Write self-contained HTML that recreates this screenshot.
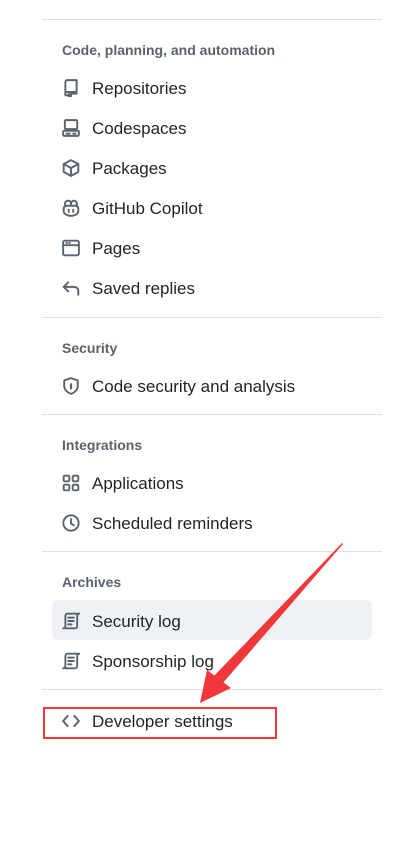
<!DOCTYPE html>
<html><head><meta charset="utf-8"><style>
*{margin:0;padding:0;box-sizing:border-box}
body{width:406px;height:852px;background:#fff;position:relative;overflow:hidden;font-family:"Liberation Sans",Arial,sans-serif;color:#1f2328}
.hr{position:absolute;left:42px;width:340px;height:1px;background:#dde1e5}
.h{position:absolute;left:62px;font-size:14px;font-weight:bold;color:#59636e;line-height:20px}
.it{position:absolute;left:92px;font-size:17px;line-height:24px}
svg.i{position:absolute;left:62px;width:18px;height:18px;fill:none;stroke:#59636e;stroke-width:1.7;stroke-linecap:round;stroke-linejoin:round}
</style></head><body>
<div class="hr" style="top:19px"></div>
<div class="h" style="top:40px">Code, planning, and automation</div>

<svg class="i" style="top:79px" viewBox="0 0 16 16"><path d="M3 14.5V2.5A1.5 1.5 0 0 1 4.5 1H13v10.5H4.5A1.5 1.5 0 0 0 3 13v1.5h2"/><path d="M6 13v2.5l1-.8 1 .8V13h5"/></svg>
<div class="it" style="top:77px">Repositories</div>
<svg class="i" style="top:119px" viewBox="0 0 16 16"><rect x="2.5" y="1" width="11" height="8" rx="1"/><rect x="1" y="10.5" width="14" height="4.5" rx="1"/><path d="M4 13h3M10 13h2"/></svg>
<div class="it" style="top:117px">Codespaces</div>
<svg class="i" style="top:159px" viewBox="0 0 16 16"><path d="M8 1l6.5 3.5v7L8 15l-6.5-3.5v-7z"/><path d="M1.5 4.5L8 8l6.5-3.5M8 8v7"/></svg>
<div class="it" style="top:157px">Packages</div>
<svg class="i" style="top:199px" viewBox="0 0 16 16"><path d="M3 6.5C2 4 3 1.5 5.5 1.5S8 3.5 8 5c0-1.5.5-3.5 2.5-3.5S14 4 13 6.5"/><path d="M1.5 8.5c0-1.5 1-2.5 2.5-2.5h8c1.5 0 2.5 1 2.5 2.5v2.5C14.5 13 11.5 15 8 15S1.5 13 1.5 11z"/><path d="M6 9.5v2M10 9.5v2"/></svg>
<div class="it" style="top:197px">GitHub Copilot</div>
<svg class="i" style="top:239px" viewBox="0 0 16 16"><rect x="1" y="1.5" width="14" height="13" rx="1.5"/><path d="M1 5.5h14M4 3.5h.5M6.5 3.5h.5"/></svg>
<div class="it" style="top:237px">Pages</div>
<svg class="i" style="top:279px" viewBox="0 0 16 16"><path d="M5.5 3L1.5 7l4 4"/><path d="M1.5 7H11a3.5 3.5 0 0 1 3.5 3.5V14"/></svg>
<div class="it" style="top:277px">Saved replies</div>

<div class="hr" style="top:317px"></div>
<div class="h" style="top:338px">Security</div>
<svg class="i" style="top:377px" viewBox="0 0 16 16"><path d="M8 1l6 2v5c0 3.5-3 6-6 7-3-1-6-3.5-6-7V3z"/><path d="M8 6.5v3.5" stroke-width="2"/></svg>
<div class="it" style="top:375px">Code security and analysis</div>

<div class="hr" style="top:414px"></div>
<div class="h" style="top:435px">Integrations</div>
<svg class="i" style="top:474px" viewBox="0 0 16 16"><rect x="1.5" y="1.5" width="5" height="5" rx="1"/><rect x="9.5" y="1.5" width="5" height="5" rx="1"/><rect x="1.5" y="9.5" width="5" height="5" rx="1"/><rect x="9.5" y="9.5" width="5" height="5" rx="1"/></svg>
<div class="it" style="top:472px">Applications</div>
<svg class="i" style="top:514px" viewBox="0 0 16 16"><circle cx="8" cy="8" r="6.8"/><path d="M8 4.5V8.5l2.5 1.5"/></svg>
<div class="it" style="top:512px">Scheduled reminders</div>

<div class="hr" style="top:551px"></div>
<div class="h" style="top:572px">Archives</div>
<div style="position:absolute;left:52px;top:600px;width:320px;height:40px;background:#eff2f5;border-radius:6px"></div>
<svg class="i" style="top:612px" viewBox="0 0 16 16"><path d="M3 14.5h8.5a2 2 0 0 0 2-2V3.5a2 2 0 0 1 2-2H5a2 2 0 0 0-2 2v9a2 2 0 0 1-2 2"/><path d="M5.5 5h5M5.5 8h5M5.5 11h3"/></svg>
<div class="it" style="top:610px">Security log</div>
<svg class="i" style="top:652px" viewBox="0 0 16 16"><path d="M3 14.5h8.5a2 2 0 0 0 2-2V3.5a2 2 0 0 1 2-2H5a2 2 0 0 0-2 2v9a2 2 0 0 1-2 2"/><path d="M5.5 5h5M5.5 8h5M5.5 11h3"/></svg>
<div class="it" style="top:650px">Sponsorship log</div>

<div class="hr" style="top:689px"></div>
<svg class="i" style="top:712px" viewBox="0 0 16 16"><path d="M5 3.5L1 8l4 4.5M11 3.5L15 8l-4 4.5"/></svg>
<div class="it" style="top:710px">Developer settings</div>
<div style="position:absolute;left:43px;top:707px;width:234px;height:32px;border:2px solid #f0373a"></div>

<svg style="position:absolute;left:0;top:0" width="406" height="852"><polygon points="342,543 343,544 222,684 213,677" fill="#f0373a"/><polygon points="200,703 207,670 231,688" fill="#f0373a"/></svg>
</body></html>
